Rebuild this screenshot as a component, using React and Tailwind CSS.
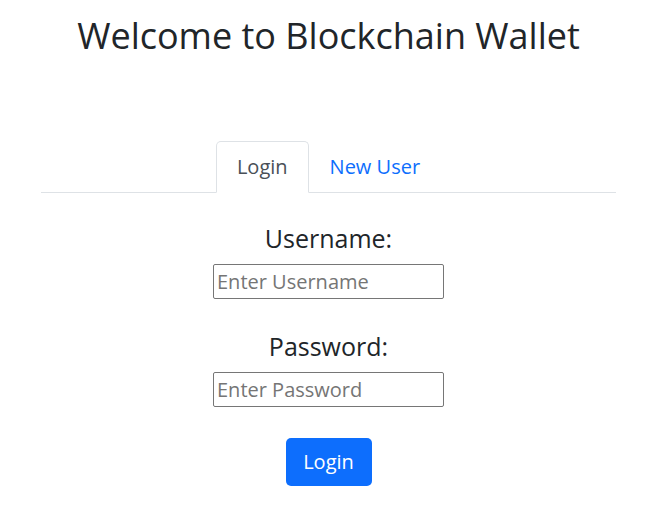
export default function App() {
  const font = { fontFamily: '"Open Sans", "Noto Sans", Arial, sans-serif' };
  return (
    <div className="min-h-screen bg-white text-[#212529]" style={font}>
      <h1 className="pt-[14px] text-center text-[36px] font-normal leading-[1.2] text-[#212529]">
        Welcome to Blockchain Wallet
      </h1>
      <div className="mx-[41px] mt-[84px] flex justify-center border-b border-[#dee2e6]">
        <button className="-mb-px rounded-t-[5px] border border-[#dee2e6] border-b-white bg-white px-5 py-[10px] text-[20px] leading-[30px] text-[#495057]">
          Login
        </button>
        <button className="-mb-px rounded-t-[5px] border border-transparent px-5 py-[10px] text-[20px] leading-[30px] text-[#0d6efd]">
          New User
        </button>
      </div>
      <div className="flex flex-col items-center">
        <label className="mt-[30px] text-[25px] leading-[30px] text-[#212529]">Username:</label>
        <input
          placeholder="Enter Username"
          className="mt-[11px] h-[35px] w-[231px] rounded-[2px] border border-[#767676] px-[3px] text-[20px] text-[#212529] placeholder:text-[#757575] outline-none"
        />
        <label className="mt-[32px] text-[25px] leading-[30px] text-[#212529]">Password:</label>
        <input
          type="password"
          placeholder="Enter Password"
          className="mt-[11px] h-[35px] w-[231px] rounded-[2px] border border-[#767676] px-[3px] text-[20px] text-[#212529] placeholder:text-[#757575] outline-none"
        />
        <button className="mt-[31px] h-[48px] w-[86px] rounded-[5px] bg-[#0d6efd] text-center text-[20px] leading-[30px] text-white">
          Login
        </button>
      </div>
    </div>
  );
}
